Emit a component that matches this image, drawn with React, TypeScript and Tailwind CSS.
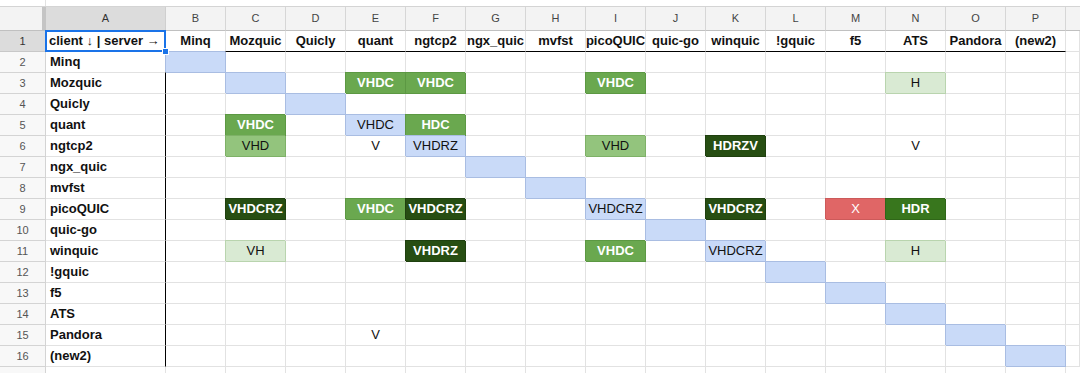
import React from 'react';

const servers = ['Minq', 'Mozquic', 'Quicly', 'quant', 'ngtcp2', 'ngx_quic', 'mvfst', 'picoQUIC', 'quic-go', 'winquic', '!gquic', 'f5', 'ATS', 'Pandora', '(new2)'];
const letters = ['B', 'C', 'D', 'E', 'F', 'G', 'H', 'I', 'J', 'K', 'L', 'M', 'N', 'O', 'P'];

type Kind = 'green' | 'lgreen' | 'vlgreen' | 'dgreen' | 'mgreen' | 'red' | 'blue' | 'plain';

const kinds: Record<Kind, string> = {
  green: 'bg-[#6aa84f] text-white font-bold border-[#5c9843] shadow-[-1px_-1px_0_0_#5c9843]',
  lgreen: 'bg-[#93c47d] text-[#111] border-[#7eb167] shadow-[-1px_-1px_0_0_#7eb167]',
  vlgreen: 'bg-[#d9ead3] text-[#111] border-[#b9d4ae] shadow-[-1px_-1px_0_0_#b9d4ae]',
  dgreen: 'bg-[#274e13] text-white font-bold border-[#1f400f] shadow-[-1px_-1px_0_0_#1f400f]',
  mgreen: 'bg-[#38761d] text-white font-bold border-[#2f6618] shadow-[-1px_-1px_0_0_#2f6618]',
  red: 'bg-[#e06666] text-white border-[#cc5a5a] shadow-[-1px_-1px_0_0_#cc5a5a]',
  blue: 'bg-[#c9daf8] text-[#111] border-[#a9bde2] shadow-[-1px_-1px_0_0_#a9bde2]',
  plain: 'text-[#111]',
};

// [clientIndex, serverIndex, text, kind]
const results: [number, number, string, Kind][] = [
  [1, 3, 'VHDC', 'green'], [1, 4, 'VHDC', 'green'], [1, 7, 'VHDC', 'green'], [1, 12, 'H', 'vlgreen'],
  [3, 1, 'VHDC', 'green'], [3, 3, 'VHDC', 'blue'], [3, 4, 'HDC', 'green'],
  [4, 1, 'VHD', 'lgreen'], [4, 3, 'V', 'plain'], [4, 4, 'VHDRZ', 'blue'], [4, 7, 'VHD', 'lgreen'], [4, 9, 'HDRZV', 'dgreen'], [4, 12, 'V', 'plain'],
  [7, 1, 'VHDCRZ', 'dgreen'], [7, 3, 'VHDC', 'green'], [7, 4, 'VHDCRZ', 'dgreen'], [7, 7, 'VHDCRZ', 'blue'], [7, 9, 'VHDCRZ', 'dgreen'], [7, 11, 'X', 'red'], [7, 12, 'HDR', 'mgreen'],
  [9, 1, 'VH', 'vlgreen'], [9, 4, 'VHDRZ', 'dgreen'], [9, 7, 'VHDC', 'green'], [9, 9, 'VHDCRZ', 'blue'], [9, 12, 'H', 'vlgreen'],
  [13, 3, 'V', 'plain'],
];

function lookup(r: number, c: number): { text: string; kind: Kind } | null {
  const hit = results.find(x => x[0] === r && x[1] === c);
  if (hit) return { text: hit[2], kind: hit[3] };
  if (r === c) return { text: '', kind: 'blue' };
  return null;
}

const grid = 'border-r border-b border-[#e2e2e2]';

export default function App() {
  return (
    <div className="w-[1080px] h-[373px] overflow-hidden bg-white font-['Liberation_Sans',Arial,sans-serif]">
      {/* formula bar remnant */}
      <div className="h-[7px] flex border-b border-[#d4d4d4]">
        <div className="w-[46px] border-r border-[#e2e2e2]" />
        <div className="flex-1" />
      </div>

      <div className="grid grid-cols-[46px_120px_repeat(15,60px)_1fr]">
        {/* column letters */}
        <div className="h-[24px] bg-[#f3f3f3] border-r-4 border-r-[#c4c4c4] border-b border-b-[#c0c0c0]" />
        <div className="h-[24px] bg-[#dcdcdc] border-r border-b border-r-[#cfcfcf] border-b-[#c0c0c0] flex items-center justify-center text-[11px] text-[#333]">A</div>
        {letters.map(l => (
          <div key={l} className="h-[24px] bg-[#f3f3f3] border-r border-b border-r-[#d6d6d6] border-b-[#c0c0c0] flex items-center justify-center text-[11px] text-[#444]">{l}</div>
        ))}
        <div className="h-[24px] bg-[#f3f3f3] border-b border-b-[#c0c0c0]" />

        {/* row 1 */}
        <div className="h-[21px] bg-[#dcdcdc] border-r border-b border-[#c8c8c8] flex items-center justify-center text-[11px] text-[#333]">1</div>
        <div className={`h-[21px] relative ${grid} flex items-center pl-[3px] text-[13px] font-bold text-[#111] whitespace-nowrap`}>
          client ↓ | server →
          <div className="absolute -left-[1px] -top-[1px] w-[121px] h-[22px] border-2 border-[#1a73e8]" />
          <div className="absolute -right-[4px] -bottom-[4px] w-[7px] h-[7px] bg-[#1a73e8] border border-white z-10" />
        </div>
        {servers.map(s => (
          <div key={s} className="h-[21px] border-r border-r-[#e2e2e2] border-b border-b-black flex items-center justify-center text-[13px] font-bold text-[#111] whitespace-nowrap">{s}</div>
        ))}
        <div className={`h-[21px] ${grid}`} />

        {/* rows 2..16 */}
        {servers.map((client, r) => (
          <React.Fragment key={client}>
            <div className="h-[21px] bg-[#f8f8f8] border-r border-b border-[#d4d4d4] flex items-center justify-center text-[11px] text-[#555]">{r + 2}</div>
            <div className="h-[21px] border-r border-r-black border-b border-b-[#e2e2e2] flex items-center pl-[4px] text-[13px] font-bold text-[#111] whitespace-nowrap">{client}</div>
            {servers.map((s, c) => {
              const cell = lookup(r, c);
              return (
                <div
                  key={s}
                  className={`h-[21px] border-r border-b flex items-center justify-center text-[13px] whitespace-nowrap ${cell ? kinds[cell.kind] : 'border-[#e2e2e2]'} ${cell && cell.kind === 'plain' ? 'border-[#e2e2e2]' : ''}`}
                >
                  {cell ? cell.text : ''}
                </div>
              );
            })}
            <div className={`h-[21px] ${grid}`} />
          </React.Fragment>
        ))}

        {/* row 17 */}
        <div className="h-[21px] bg-[#f8f8f8] border-r border-[#d4d4d4]" />
        <div className="h-[21px] border-r border-[#e2e2e2]" />
        {letters.map(l => (
          <div key={l} className="h-[21px] border-r border-[#e2e2e2]" />
        ))}
        <div className="h-[21px]" />
      </div>
    </div>
  );
}
